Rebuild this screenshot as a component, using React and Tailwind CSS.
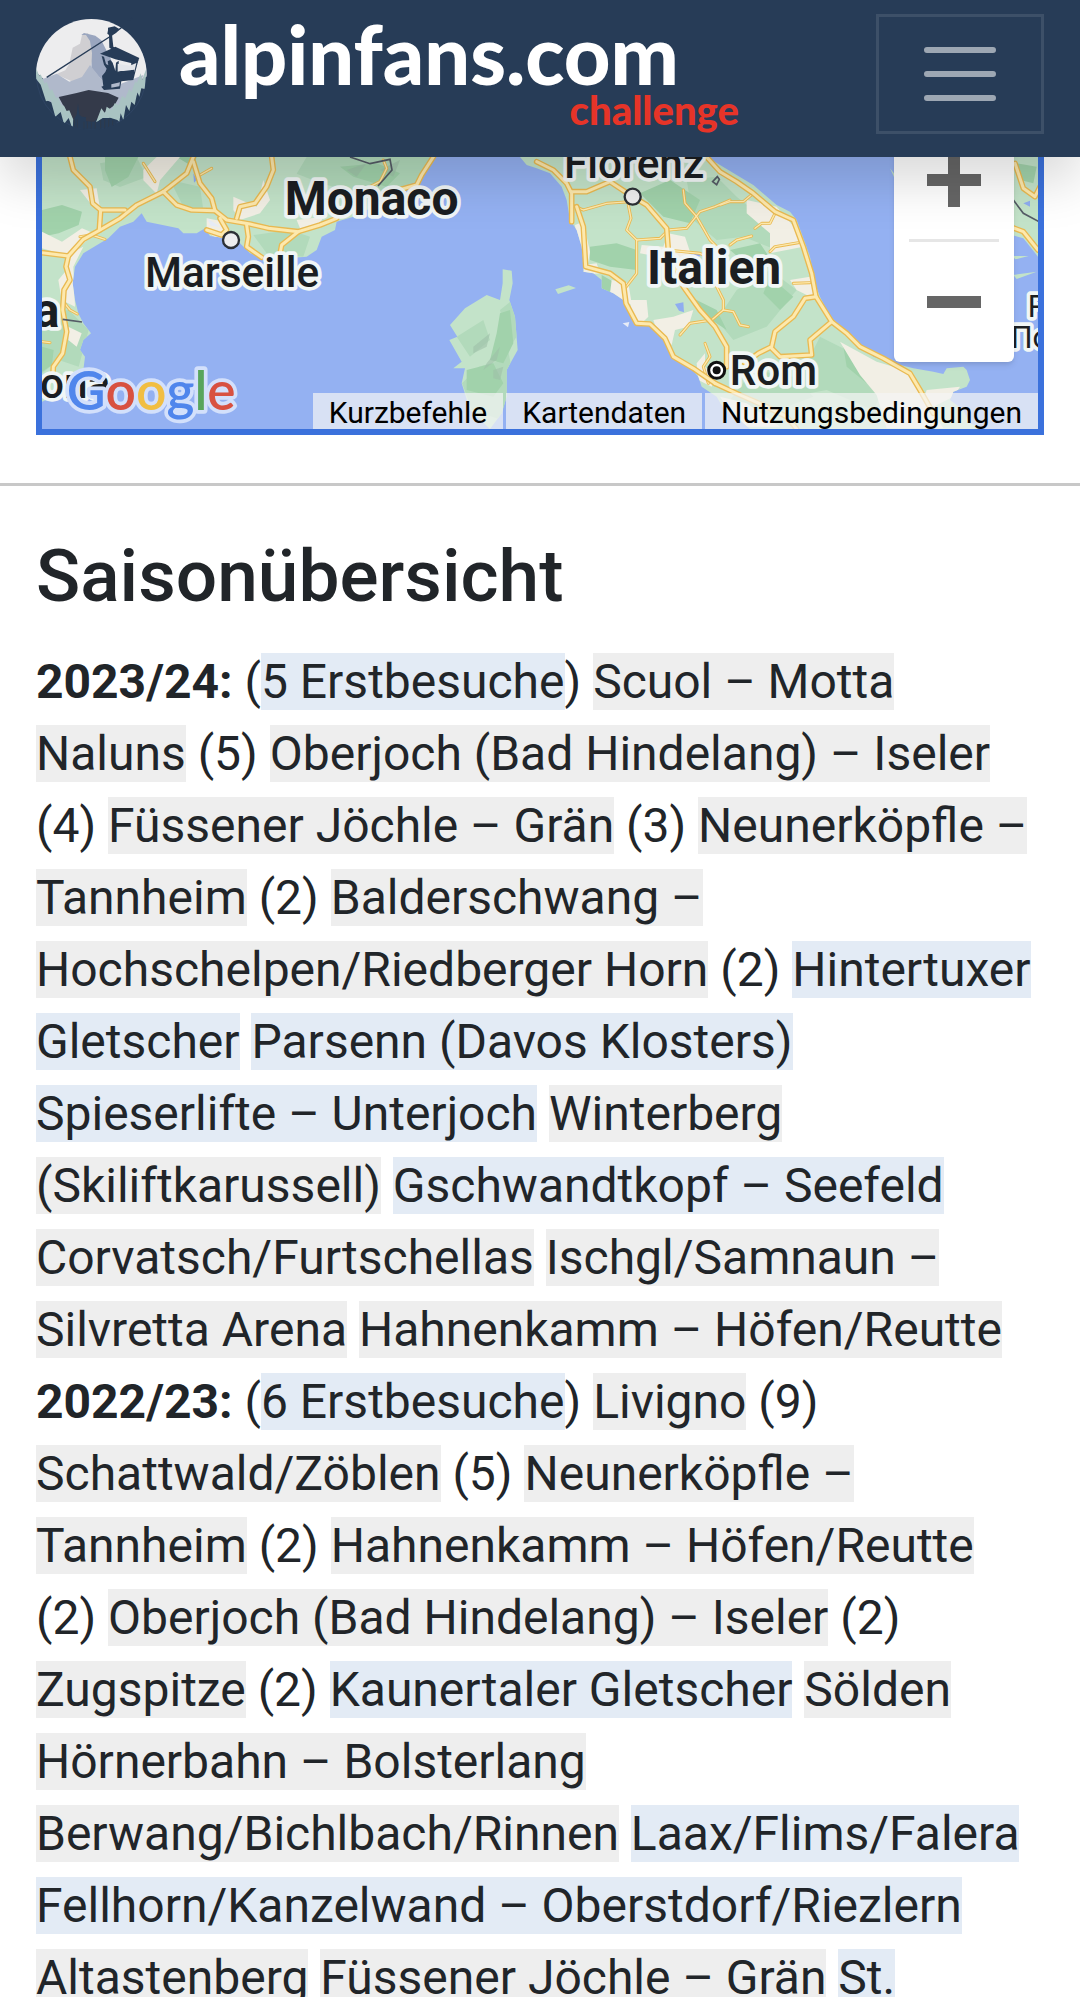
import { clsx } from 'clsx'

const seasons = [
  {
    season: '2023/24',
    firstVisits: 5,
    resorts: [
      { name: 'Scuol – Motta Naluns', days: 5 },
      { name: 'Oberjoch (Bad Hindelang) – Iseler', days: 4 },
      { name: 'Füssener Jöchle – Grän', days: 3 },
      { name: 'Neunerköpfle – Tannheim', days: 2 },
      { name: 'Balderschwang – Hochschelpen/Riedberger Horn', days: 2 },
      { name: 'Hintertuxer Gletscher', first: true },
      { name: 'Parsenn (Davos Klosters)', first: true },
      { name: 'Spieserlifte – Unterjoch', first: true },
      { name: 'Winterberg (Skiliftkarussell)' },
      { name: 'Gschwandtkopf – Seefeld', first: true },
      { name: 'Corvatsch/Furtschellas' },
      { name: 'Ischgl/Samnaun – Silvretta Arena' },
      { name: 'Hahnenkamm – Höfen/Reutte' },
    ],
  },
  {
    season: '2022/23',
    firstVisits: 6,
    resorts: [
      { name: 'Livigno', days: 9 },
      { name: 'Schattwald/Zöblen', days: 5 },
      { name: 'Neunerköpfle – Tannheim', days: 2 },
      { name: 'Hahnenkamm – Höfen/Reutte', days: 2 },
      { name: 'Oberjoch (Bad Hindelang) – Iseler', days: 2 },
      { name: 'Zugspitze', days: 2 },
      { name: 'Kaunertaler Gletscher', first: true },
      { name: 'Sölden' },
      { name: 'Hörnerbahn – Bolsterlang' },
      { name: 'Berwang/Bichlbach/Rinnen' },
      { name: 'Laax/Flims/Falera', first: true },
      { name: 'Fellhorn/Kanzelwand – Oberstdorf/Riezlern', first: true },
      { name: 'Altastenberg' },
      { name: 'Füssener Jöchle – Grän' },
      { name: 'St.', first: true },
    ],
  },
]

const majorRoads = [
  '66,308 145,318 190,268 240,240 300,205 350,165 430,125 500,70 520,21',
  '145,318 138,350 150,390 132,420 128,480 140,545 128,610 100,650 98,690',
  '150,21 160,60 210,110 218,160 242,180 238,240',
  '242,180 315,180',
  '430,125 470,165 515,180 585,182 620,210 690,222 745,235 835,245 900,225 950,205',
  '520,35 540,100 575,145 585,182',
  '755,21 760,60 740,110 705,160 660,170 650,205',
  '835,245 785,285 780,312',
  '680,225 685,260 680,290 725,322',
  '600,205 620,240 605,255 560,240',
  '1240,21 1205,75 1190,105 1100,130',
  '1550,35 1600,60 1640,100 1655,130 1655,215',
  '1655,125 1700,125 1770,95 1838,140 1880,165 1940,235 1945,300 1990,410 2040,480 2085,530 2120,590 2120,650',
  '1670,170 1690,230 1697,350 1770,370 1810,400 1818,460 1850,520 1890,522 1935,565 1960,620 2020,655 2085,700',
  '2060,21 2100,65 2150,95 2200,130 2265,185 2320,210 2350,290 2375,370 2388,440 2435,515 2480,550 2520,590 2590,625 2670,670 2700,720 2740,790',
  '2388,440 2355,445 2320,500 2265,545 2255,590 2215,610 2175,640',
  '2435,515 2370,570 2375,615 2280,620 2255,595',
  '2085,700 2160,735 2240,770 2300,800 2330,837',
  '2985,40 3010,115 3045,140 3060,110',
  '2970,230 3010,245 3054,300',
]

const minorRoads = [
  '1655,165 1690,180 1760,160 1830,155',
  '1825,165 1833,205 1820,240 1850,270 1850,370 1815,415',
  '1850,270 1920,265 1945,240 2000,235 2040,185 2085,170 2130,150',
  '1990,120 1995,160 2030,200 2070,270 2110,310',
  '1980,555 2010,520 2075,510 2110,480',
  '2055,580 2070,620 2050,650 2065,700',
  '2100,165 2130,155 2170,155 2200,130',
  '2205,235 2225,220 2250,220 2265,190',
  '2130,285 2150,270 2195,258',
  '2250,305 2265,290 2335,278',
  '2320,400 2370,398',
  '2110,480 2140,485 2160,525 2185,530',
  '1940,300 2040,310 2080,330',
  '2085,400 2110,450 2110,480',
  '180,260 215,255 255,268',
  '370,40 405,95',
  '540,75 575,55',
  '130,455 150,480 172,492',
  '66,575 90,578',
  '1090,30 1100,55 1080,95 1050,110',
]

const labelClass = 'fill-[#1b1e22] stroke-[#f1f6f6] [paint-order:stroke] [stroke-linejoin:round]'

function Logo() {
  return (
    <svg viewBox="48 36 333 342" className="h-[114px] w-[111px] shrink-0" aria-hidden="true">
      <defs>
        <clipPath id="badge">
          <circle cx="214" cy="208" r="166" />
        </clipPath>
      </defs>
      <circle cx="214" cy="208" r="165" fill="#273c57" stroke="#34486a" strokeWidth="2" />
      <g clipPath="url(#badge)">
        <path fill="#ededee" d="M40 30h350v180l-60 30H90l-44-40z" />
        <path fill="#d0cfd2" d="M148 176l10-48 22-12 6-26 18-6 14 34 4 30-10 36-12 32-42 14-50-22 28-12z" />
        <path fill="#9aa6bf" d="M184 90l8-6 34 8 18 14 12 24 14 26 24 60-8 34-40-24-32-36 2-46-6-36-12-18z" />
        <path fill="#b0b9cb" d="M60 225l50-19 38 24 38-14 24-36 40 50 34 14 50-20 36-14-20 60-50 36-30 20-120-10-70-30z" />
        <path fill="#343a4a" d="M116 276l54-12 36-9 58 9 32 14-12 22-40 30-26 24h-58l-20-34z" />
        <path
          fill="#a9c3c2"
          d="M48 188L58 214l4-6 12 28 6-6 10 28 6-6 12 28 6-4 10 24 8 2 8 16 8-2 12 28-2 29-12-34-14 18-10-36-16 14-14-50-14 4-16-50-14-18z"
        />
        <path
          fill="#a9c3c2"
          d="M380 188L366 225l-4-20-12 30-4-7-12 34-6-12-12 30-10-8-10 28-12-5-9 20-15-10-5 20-11-15-16 42 12-7 30-7 22 7 6 5 4-25 8 20 8-45 10 18 6-28 10 10 8-38 6 13 6-25 10 2z"
        />
        <path fill="#273c57" d="M160 345l10-16 4-35 4 35 8 6 12 2v12l34 2 16-12h24l18 14-2 36H160z" />
        <path
          fill="none"
          stroke="#323947"
          strokeWidth="2"
          d="M164 342v30m8-28v28m20-22v20m10-20v20m12-20v20m12-20v20m16-26v26m12-28v28m12-28v28m12-24v20"
        />
      </g>
      <path stroke="#273c57" strokeWidth="4" fill="none" d="M80 217L268 96l34-26 34-30" />
      <path fill="#273c57" d="M264 68l20-4 14 8-10 12-12 5 4 36 6 4-8 5-10-6-1-38-5-4 2-10z" />
      <path fill="#273c57" d="M240 146l32-14 14-7 72 34-8 18-14-2-50-12z" />
      <path
        fill="#273c57"
        d="M334 170l14 3 8-10-8 30-8 32-36 4-4 22-48 4-8-10 6-2-4-30 10-12 4-10-8-12-7-26 7 2 6 22 7 4-2-12 8-4 7 8 8 26 2-26 8-6 1 30 36 3z"
      />
      <path fill="#e4e6ea" d="M293 176l36 6 20-8-6 26-8-4-32 2-10 4z" />
      <path fill="#273c57" d="M291 200l52-6v6l-48 12z" />
      <path fill="#b0b9cb" d="M274 238l26-6-2 12-24 4z" />
    </svg>
  )
}

function Roads({ lines, outer, inner }) {
  return (
    <g fill="none" strokeLinejoin="round" strokeLinecap="round">
      {lines.map((points) => (
        <polyline key={points} points={points} stroke="#e9b951" strokeWidth={outer} />
      ))}
      {lines.map((points) => (
        <polyline key={points} points={points} stroke="#fde9ae" strokeWidth={inner} />
      ))}
    </g>
  )
}

function Terrain() {
  return (
    <svg
      viewBox="66 21 2988 816"
      preserveAspectRatio="xMidYMid slice"
      className="block h-[272px] w-full bg-[#94b1f2] font-[Roboto,sans-serif]"
      role="img"
      aria-label="Karte"
    >
      <defs>
        <clipPath id="land">
          <path d="M66 21H1240L1205 90 1150 108 1100 130 1060 170 1000 200 950 215 945 240 905 260 890 300 860 320 800 325 740 325 690 310 660 280 620 265 570 258 555 235 530 250 490 250 475 235 380 215 365 190 340 215 300 230 265 265 240 280 190 310 165 350 158 400 165 450 175 490 190 520 213 550 190 570 180 600 195 620 190 660 120 700 100 740 66 755z" />
          <path d="M1500 21L1520 45 1550 55 1590 70 1625 110 1640 150 1650 210 1670 240 1685 290 1692 350 1690 365 1720 370 1745 390 1745 415 1780 430 1810 450 1830 490 1860 525 1900 525 1935 560 1955 620 2000 640 2035 680 2045 710 2090 740 2110 775 2160 810 2190 837H2890L2850 820 2830 780 2790 750 2800 725 2840 710 2850 690 2840 660 2830 650 2780 655 2770 672 2740 665 2680 655 2620 640 2560 620 2500 560 2430 500 2400 440 2385 400 2370 320 2330 210 2310 185 2270 165 2200 105 2150 75 2100 45 2060 21z" />
          <path d="M1448 358L1475 362 1478 400 1468 450 1485 500 1493 600 1460 660 1460 740 1445 790 1410 837 1350 780 1325 700 1335 655 1300 655 1325 635 1288 570 1312 560 1290 525 1335 475 1400 435 1440 450 1448 400z" />
          <path d="M2975 21H3054V320L3010 265 2975 255z" />
          <path d="M1606 418l40-12 22 8-54 18z" />
          <path d="M2976 318l50 0-40 10zM2980 375l70-10-60 22zM2610 55l20 25-4 10z" />
        </clipPath>
      </defs>

      <g clipPath="url(#land)">
        <rect x="66" y="21" width="2988" height="816" fill="#c3e3c9" />
        <g fill="#b2dabb">
          <path d="M240 40l110-19 30 60-80 30-50-20zM450 90l90 20 10 70-60-10zM700 255l110-15 60 20-20 60-110-10zM860 21h380l-40 90-140 40-180-60-50-20zM66 490l80-10 60 60-30 110-60-20-50 40zM2000 90l90-10 60 60 100 80 20 80-100-40-80 10-70-60zM2150 420l100-60 80 60-90 110-100 40-50-60zM2400 560l120 60 80 80-40 80-140-60-110 20zM2200 660l120 20 60 60-160 60-90-50z" />
          <path d="M1440 480l50-40 6 110-50 80-70 20-50 50 30 80 90 30 30-150zM1310 560l80-50 20 60-60 50z" />
        </g>
        <g fill="#a1d2ab">
          <path d="M255 21h100l-30 60-50 30-20-50zM66 180l60-15 60 20-10 40-60 25-50 10zM66 590l35 10-5 45-30 20zM470 21h60l-10 30zM960 50l110-10 70 30-40 40-100-30zM1710 290l80-10 60 20 0 60-80-10-60-20zM1745 375l35 20-10 35-25-15zM1860 130l90-40 90 60-30 70-80-20zM2010 440l80 40 30 60-60-40zM1440 490l30-10 10 100-30 60-40-10 20-80zM1340 660l80-20 30 60-30 40-80-20zM2130 300l90-20 40 60-60 20zM2470 590l90 60-20 50-60-50zM2250 380l70 60-40 40-50-50zM2990 40l60 10-10 50-40-10z" />
        </g>
        <g fill="#f2efe5">
          <path d="M66 245l60 30 60-40 35 15-70 70-85-25zM150 310l40-20-30 60 5 120-40-20-10-60 25-30zM370 60l40-39h70l-60 70-10 40-40-40zM640 140l70 30 20-80 20 60-30 40-60 20-20-30zM180 120l50-5 10 60-25-10zM560 205l55 10-10 60-45-30zM830 210l80-10-10 20-60 15zM145 530l40 20-15 40-25-20z" />
          <path d="M1665 225l25-10 20 90-10 60-20-10zM1690 345l40-5 10 30-50 5zM1775 390l50 10 10 60-25 10-40-40zM1830 450l50 0 5 50-20 20-30-20zM1900 510l60-10 60-20-15 50-40 10-10 45-50-60zM1945 250l50 10 20 60-40 30-60-30-55-10 5-25 65 5zM2030 640l25-30 0 40 30 30-10 30-40-20zM2180 150l90 20 60 70 20 50-100 20 0-60-70-60zM2310 390l60-10 20 70-60-30zM2460 575l110 60 100 30 40 80 60 90h-170l-30-100-50-60zM2720 720l100-10-20 30-60 30-30-20zM2100 740l80 20 100 70h-120z" />
        </g>
        <path fill="#8fadf0" d="M1965 462l25-5 2 30-15-5zM2000 305l50 5-20 15zM3010 160l20-8 0 18zM520 70l10 20-8 8z" />
        <path fill="#9fbfa8" opacity=".6" d="M1360 590l50-40-10 40-40 20zM1400 640l40-50-10 40-40 30zM1420 660l30-10-10 40-20-5zM980 60l60-20-30 40zM1080 60l60-30-20 50z" />
      </g>
      <path d="M1808 520l20-4-4 16zM562 205l40 26-30-4z" fill="#e7ecf7" />

      <Roads lines={minorRoads} outer={9} inner={4} />
      <Roads lines={majorRoads} outer={17} inner={9} />

      <g fill="none" stroke="#555c66" strokeWidth="5">
        <path d="M128 508l58 8M990 21l60 20 60-13 6 32-42 48M2980 150l30 40 45 24M2078 95l14-15 6 8-8 16z" />
      </g>
      <g fill="#eeeeef" stroke="#2c3036" strokeWidth="7">
        <circle cx="633" cy="270" r="24" />
        <circle cx="1838" cy="140" r="24" />
      </g>
      <circle cx="2090" cy="661" r="24" fill="#fff" stroke="#111" strokeWidth="9" />
      <circle cx="2090" cy="661" r="12" fill="#111" />

      <g className={labelClass} strokeWidth="22">
        <g fontSize="144" fontWeight="700">
          <text x="794" y="195">Monaco</text>
          <text x="1881" y="402">Italien</text>
          <text x="118" y="530" textAnchor="end">a</text>
        </g>
        <g fontSize="127" fontWeight="500">
          <text x="375" y="412">Marseille</text>
          <text x="1632" y="83">Florenz</text>
          <text x="2129" y="705">Rom</text>
          <text x="60" y="745">ona</text>
        </g>
        <g fontSize="92">
          <text x="3023" y="502">P</text>
          <text x="2972" y="593">По</text>
        </g>
      </g>
      <text
        x="140"
        y="780"
        fontSize="160"
        fontWeight="600"
        strokeWidth="22"
        className="stroke-[#d3e0fb] font-[Lato,sans-serif] [paint-order:stroke] [stroke-linejoin:round]"
      >
        <tspan fill="#5086ec">G</tspan>
        <tspan fill="#d85140">o</tspan>
        <tspan fill="#f1be42">o</tspan>
        <tspan fill="#5086ec">g</tspan>
        <tspan fill="#58a55c">l</tspan>
        <tspan fill="#d85140">e</tspan>
      </text>
    </svg>
  )
}

function MapView() {
  const footer = 'flex h-9 items-center bg-[#f5f5f5]/70 px-4 pt-1 text-3xl leading-8 text-black'
  return (
    <section className="relative mx-9 overflow-hidden border-6 border-t-0 border-[#3b71dc]">
      <Terrain />
      <div className="absolute -top-9 right-6 flex w-[120px] flex-col items-center rounded-md bg-white shadow-md">
        <button type="button" aria-label="Vergrößern" className="flex h-[118px] w-full items-center justify-center">
          <svg viewBox="0 0 18 18" className="size-[54px]" fill="#666">
            <path d="M7 0h4v7h7v4h-7v7H7v-7H0V7h7z" />
          </svg>
        </button>
        <div className="h-[3px] w-[90px] bg-[#e6e6e6]" />
        <button type="button" aria-label="Verkleinern" className="flex h-[120px] w-full items-center justify-center">
          <svg viewBox="0 0 18 18" className="size-[54px]" fill="#666">
            <path d="M0 7h18v4H0z" />
          </svg>
        </button>
      </div>
      <div className="absolute right-0 bottom-0 flex gap-[3px] whitespace-nowrap">
        <button type="button" className={footer}>Kurzbefehle</button>
        <button type="button" className={footer}>Kartendaten</button>
        <a href="#nutzung" className={footer}>Nutzungsbedingungen</a>
      </div>
    </section>
  )
}

function Season({ season, firstVisits, resorts }) {
  return (
    <p>
      <strong className="font-bold">{season}:</strong> (<span className="bg-[#e3ebf5]">{firstVisits} Erstbesuche</span>){' '}
      {resorts.map(({ name, days, first }) => (
        <span key={name}>
          <span className={clsx(first ? 'bg-[#e3ebf5]' : 'bg-[#eeeeee]')}>{name}</span>
          {days && ` (${days})`}{' '}
        </span>
      ))}
    </p>
  )
}

export default function App() {
  return (
    <div className="flex h-screen flex-col overflow-hidden bg-white font-[Roboto,sans-serif] text-[#212529]">
      <header className="relative z-10 flex shrink-0 items-center justify-between bg-[#273c57] px-9 pt-3.5 pb-[23px] shadow-[0_24px_48px_rgba(0,0,0,0.15)]">
        <a href="#start" className="flex items-center gap-8 font-[Lato,sans-serif] font-black">
          <Logo />
          <span className="flex flex-col">
            <span className="pr-[60px] text-[81px] leading-[72px] text-white">alpinfans.com</span>
            <span className="self-end text-[40px] leading-10 text-[#e63428]">challenge</span>
          </span>
        </a>
        <button
          type="button"
          aria-label="Menü"
          className="flex h-[120px] w-[168px] items-center justify-center border-3 border-white/10"
        >
          <svg viewBox="0 0 30 30" className="size-[90px]" stroke="#fff" strokeOpacity=".55" strokeWidth="2" strokeLinecap="round">
            <path d="M4 7h22M4 15h22M4 23h22" />
          </svg>
        </button>
      </header>

      <main className="min-h-0 flex-1">
        <MapView />
        <hr className="mt-12 border-t-3 border-[#c8c8c8]" />
        <div className="px-9 pt-12">
          <h2 className="mb-7 text-[73px] leading-[84px] font-medium">Saisonübersicht</h2>
          <div className="text-5xl leading-[72px]">
            {seasons.map((s) => (
              <Season key={s.season} {...s} />
            ))}
          </div>
        </div>
      </main>
    </div>
  )
}
